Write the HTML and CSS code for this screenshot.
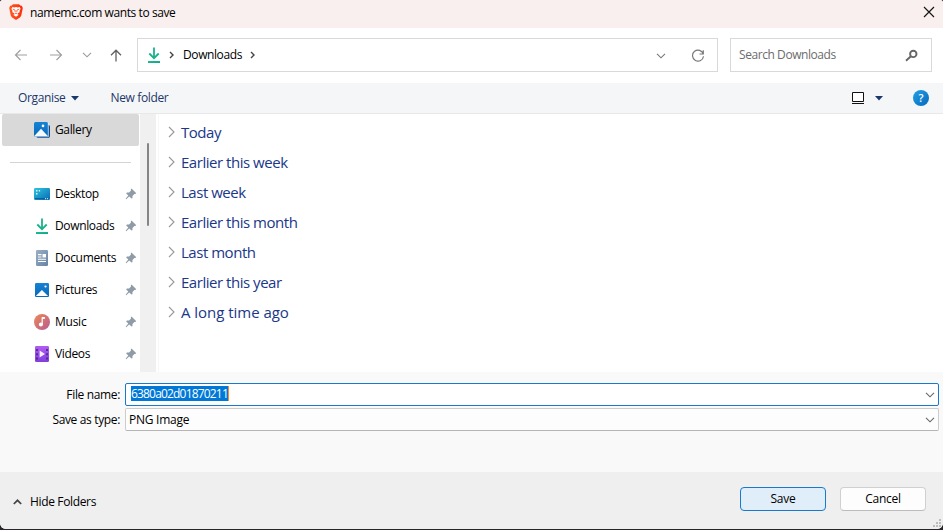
FILE: index.html
```html
<!DOCTYPE html>
<html lang="en-GB">
<head>
<meta charset="utf-8">
<title>namemc.com wants to save</title>
<link rel="stylesheet" href="styles.css">
</head>
<body>
<svg class="defs" aria-hidden="true">
  <defs>
    <linearGradient id="green" x1="0" y1="0" x2="1" y2="1"><stop offset="0" stop-color="#21c087"/><stop offset="1" stop-color="#12a391"/></linearGradient>
    <linearGradient id="blue" x1="0" y1="0" x2="0" y2="1"><stop offset="0" stop-color="#1583d5"/><stop offset="1" stop-color="#0869b9"/></linearGradient>
    <linearGradient id="cyan" x1="0" y1="0" x2="1" y2="1"><stop offset="0" stop-color="#2fc6dd"/><stop offset="1" stop-color="#0869b5"/></linearGradient>
    <linearGradient id="slate" x1="0" y1="0" x2="1" y2="1"><stop offset="0" stop-color="#9cafc6"/><stop offset="1" stop-color="#6782a5"/></linearGradient>
    <linearGradient id="coral" x1="0" y1="0" x2="1" y2="1"><stop offset="0" stop-color="#ee8956"/><stop offset="1" stop-color="#b75a92"/></linearGradient>
    <linearGradient id="violet" x1="0" y1="0" x2="0" y2="1"><stop offset="0" stop-color="#b05cf0"/><stop offset="1" stop-color="#833ddd"/></linearGradient>
    <linearGradient id="flame" x1="0" y1="0" x2="1" y2="0"><stop offset="0" stop-color="#ff5a24"/><stop offset="1" stop-color="#ff2a0a"/></linearGradient>
  </defs>
  <symbol id="pin" viewBox="0 0 12 12"><path d="M6.5 .6 11.3 5.3 10.2 6.1 9.4 5.9 7.5 7.9 7.4 10.2 6.5 10.5 4.2 8.4 1.2 11.3 .6 10.7 3.3 7.5 1.2 5.4 1.8 4.5 4.1 4.4 6 2.5 5.8 1.4Z" fill="#8f9ca5"/></symbol>
  <symbol id="download" viewBox="0 0 14 16"><path d="M7 .5v10.500M2.300 6.500 7 11.200 11.700 6.500" fill="none" stroke="#19b28c" stroke-width="1.8"/><path d="M1 14h12v2H1z" fill="url(#green)"/></symbol>
  <symbol id="chevron" viewBox="0 0 10 6"><path d="M1 .8 5 4.8 9 .8" fill="none" stroke="currentColor" stroke-width="1.1"/></symbol>
</svg>
<div class="dialog">
  <header class="titlebar">
    <svg class="brand" width="16" height="16" viewBox="0 0 16 16"><path d="M5 .2h6l1.300 1.300 1.500.3 1 2.200-.3 1.500-1.300 6.200-1.300 1.900L8 16l-3.900-2.400-1.300-1.900L1.500 5.500 1.200 4l1-2.200 1.500-.3Z" fill="url(#flame)"/><path d="M4.400 3.100 6.300 3.400 8 3 9.700 3.400l1.900-.3 1 1.700-1.100 2.100.2 1.300-2 1.100.8 1.600L8 12.800l-2.500-1.900.8-1.600-2-1.100.2-1.300-1.100-2.100Z" fill="#fff"/><path d="M4.800 5.200 7 6 7.200 8.200M11.200 5.200 9 6 8.800 8.200M6.400 10 8 9.100 9.600 10" fill="none" stroke="#ff4a22" stroke-width=".8"/></svg>
    <span class="title">namemc.com wants to save</span>
    <svg class="close" width="12" height="12" viewBox="0 0 12 12"><path d="m1 1 10 10M11 1 1 11" stroke="#151515" stroke-width="1.15"/></svg>
  </header>
  <nav class="nav">
    <div class="history">
      <svg width="14" height="12" viewBox="0 0 14 12"><path d="M13 6H1.500M6.500 1l-5 5 5 5" fill="none" stroke="#a0a0a0" stroke-width="1.2"/></svg>
      <svg width="14" height="12" viewBox="0 0 14 12"><path d="M1 6h11.500M7.500 1l5 5-5 5" fill="none" stroke="#a0a0a0" stroke-width="1.2"/></svg>
      <svg class="recent" width="10" height="6"><use href="#chevron"/></svg>
      <svg width="12" height="13" viewBox="0 0 12 13"><path d="M6 12.500V1.200M1 6.200l5-5 5 5" fill="none" stroke="#606060" stroke-width="1.3"/></svg>
    </div>
    <div class="address">
      <svg class="place" width="14" height="16"><use href="#download"/></svg>
      <svg class="crumb" width="5" height="8" viewBox="0 0 5 8"><path d="m1 1 3 3-3 3" fill="none" stroke="#444" stroke-width="1.4"/></svg>
      <span class="path">Downloads</span>
      <svg class="crumb" width="5" height="8" viewBox="0 0 5 8"><path d="m1 1 3 3-3 3" fill="none" stroke="#444" stroke-width="1.4"/></svg>
      <svg class="drop" width="10" height="6"><use href="#chevron"/></svg>
      <svg class="reload" width="14" height="14" viewBox="0 0 14 14"><path d="M12.300 5A5.500 5.500 0 1 0 12.500 7.200M12.300 1.200V5H8.500" fill="none" stroke="#777" stroke-width="1.15"/></svg>
    </div>
    <div class="search">
      <span>Search Downloads</span>
      <svg width="13" height="13" viewBox="0 0 13 13"><circle cx="8.300" cy="4.900" r="3.200" fill="none" stroke="#666" stroke-width="1.900"/><path d="M5.900 7.300 1 11.800" stroke="#666" stroke-width="1.900"/></svg>
    </div>
  </nav>
  <div class="toolbar">
    <span class="organise">Organise</span>
    <svg class="caret" width="8" height="5" viewBox="0 0 8 5"><path d="M0 0h8L4 4.600Z" fill="#19386d"/></svg>
    <span class="newfolder">New folder</span>
    <svg class="view" width="12" height="12" viewBox="0 0 12 12"><path d="M.5.500h11v9H.500z" fill="#fff" stroke="#111"/><path d="M0 11.500h12" stroke="#111"/></svg>
    <svg class="caret" width="8" height="5" viewBox="0 0 8 5"><path d="M0 0h8L4 4.600Z" fill="#19386d"/></svg>
    <span class="help">?</span>
  </div>
  <div class="body">
    <aside class="sidebar">
      <div class="item selected">
        <svg width="16" height="16" viewBox="0 0 16 16"><path d="M13 3h1.500a1.500 1.500 0 0 1 1.500 1.500V14a2 2 0 0 1-2 2H4a1.500 1.500 0 0 1-1.500-1.500V13Z" fill="#0c4d92"/><rect width="14" height="14.500" rx="1.500" fill="url(#blue)"/><path d="M14.300 1v13.800H1.200" fill="none" stroke="#e2eff9" stroke-width=".8"/><path d="m.3 14 6.700-7.300L13.800 14Z" fill="#f5faff"/><circle cx="9" cy="3.900" r="1.300" fill="#fff"/></svg>
        <span>Gallery</span>
      </div>
      <div class="divider"></div>
      <div class="item"><svg width="16" height="16" viewBox="0 0 16 16"><rect y="2" width="16" height="12" rx="1.200" fill="url(#cyan)"/><path d="M2 4h1.500v1.500H2zM2 7h1.500v1.500H2zM4.800 4h1.300v1.500H4.800z" fill="#d8f6fb"/><path d="M1 12.700h10" stroke="#07558f"/><path d="M11 12.700h1m1 0h1" stroke="#d8f6fb"/></svg><span>Desktop</span><svg class="pin" width="12" height="12"><use href="#pin"/></svg></div>
      <div class="item"><svg width="16" height="16" viewBox="0 0 16 16"><use href="#download" x="1" width="14" height="16"/></svg><span>Downloads</span><svg class="pin" width="12" height="12"><use href="#pin"/></svg></div>
      <div class="item"><svg width="16" height="16" viewBox="0 0 16 16"><rect x="2" width="12" height="16" rx="1.300" fill="url(#slate)"/><path d="M4 4.600h3.500M4 7h3.500M4 9.300h8M4 11.500h8" stroke="#fff" stroke-width="1.100"/><path d="M8.500 4h3.500v3.500H8.500z" fill="#fff"/></svg><span>Documents</span><svg class="pin" width="12" height="12"><use href="#pin"/></svg></div>
      <div class="item"><svg width="16" height="16" viewBox="0 0 16 16"><rect x="1" y="1" width="14" height="14" rx="1.200" fill="url(#blue)"/><path d="m1.800 14 6.100-6 6.200 6Z" fill="#fff"/><circle cx="11.500" cy="4.500" r="1.100" fill="#fff"/></svg><span>Pictures</span><svg class="pin" width="12" height="12"><use href="#pin"/></svg></div>
      <div class="item"><svg width="16" height="16" viewBox="0 0 16 16"><circle cx="8" cy="8" r="8" fill="url(#coral)"/><path d="M8.200 3.200v7" stroke="#fff" stroke-width="1.200"/><path d="M8 3h2.900v1.900H8z" fill="#fff"/><circle cx="6.900" cy="10.600" r="2" fill="#fff"/></svg><span class="music">Music</span><svg class="pin" width="12" height="12"><use href="#pin"/></svg></div>
      <div class="item"><svg width="16" height="16" viewBox="0 0 16 16"><rect x="1" width="14" height="16" rx="1.200" fill="url(#violet)"/><path d="M3 3v11M13 3v11" stroke="#3d217d" stroke-width="1.500" stroke-dasharray="2 2.200"/><path d="M5.600 4.500v7L11 8Z" fill="#f5edff"/></svg><span>Videos</span><svg class="pin" width="12" height="12"><use href="#pin"/></svg></div>
    </aside>
    <div class="scrollbar"><div class="thumb"></div></div>
    <main class="groups">
      <div class="group"><svg width="7" height="12" viewBox="0 0 7 12"><path d="m1 1 5 5-5 5"/></svg><span>Today</span></div>
      <div class="group"><svg width="7" height="12" viewBox="0 0 7 12"><path d="m1 1 5 5-5 5"/></svg><span>Earlier this week</span></div>
      <div class="group"><svg width="7" height="12" viewBox="0 0 7 12"><path d="m1 1 5 5-5 5"/></svg><span>Last week</span></div>
      <div class="group"><svg width="7" height="12" viewBox="0 0 7 12"><path d="m1 1 5 5-5 5"/></svg><span>Earlier this month</span></div>
      <div class="group"><svg width="7" height="12" viewBox="0 0 7 12"><path d="m1 1 5 5-5 5"/></svg><span>Last month</span></div>
      <div class="group"><svg width="7" height="12" viewBox="0 0 7 12"><path d="m1 1 5 5-5 5"/></svg><span>Earlier this year</span></div>
      <div class="group"><svg width="7" height="12" viewBox="0 0 7 12"><path d="m1 1 5 5-5 5"/></svg><span class="loose">A long time ago</span></div>
    </main>
  </div>
  <section class="form">
    <div class="label">File name:</div>
    <div class="field name"><span class="selection">6380a02d01870211</span><svg width="10" height="6"><use href="#chevron"/></svg></div>
    <div class="label">Save as type:</div>
    <div class="field type"><span>PNG Image</span><svg width="10" height="6"><use href="#chevron"/></svg></div>
  </section>
  <footer class="footer">
    <svg width="9" height="6" viewBox="0 0 9 6"><path d="m.8 5 3.700-3.700L8.200 5" fill="none" stroke="#444" stroke-width="1.700"/></svg>
    <span class="hide">Hide Folders</span>
    <div class="button primary">Save</div>
    <div class="button">Cancel</div>
    <svg class="grip" width="8" height="8" viewBox="0 0 8 8"><path d="M6 0h2v2H6zM3 3h2v2H3zM6 3h2v2H6zM0 6h2v2H0zM3 6h2v2H3zM6 6h2v2H6z" fill="#bdbdbd"/></svg>
  </footer>
</div>
</body>
</html>
```

FILE: styles.css
```css
* { box-sizing: border-box; }
body {
  margin: 0;
  background: #29252b;
  font: 12px/16px "Open Sans", "Noto Sans", sans-serif;
  letter-spacing: -0.35px;
  color: #000;
}
svg { display: block; flex: none; }
span { white-space: nowrap; }
.defs { position: absolute; width: 0; height: 0; }
.dialog {
  width: 943px;
  height: 529px;
  display: flex;
  flex-direction: column;
  background: #fff;
  border-radius: 3px 3px 6px 6px;
  overflow: hidden;
}
.titlebar { height: 28px; display: flex; align-items: center; padding: 0 8px; background: #f9efee; flex: none; }
.brand { margin-top: -4px; }
.title { margin: -2px auto 0 6px; letter-spacing: -0.41px; }
.close { margin-top: -4px; }

.nav { height: 55px; display: flex; align-items: center; flex: none; padding: 0 11px 1px 14px; }
.history { width: 123px; display: flex; align-items: center; }
.history svg + svg { margin-left: 21px; }
.history .recent { margin-left: 19px; color: #999; }
.history .recent + svg { margin-left: 18px; }
.address, .search { height: 34px; display: flex; align-items: center; border: 1px solid #d9d9d9; }
.address { width: 581px; padding: 0 12px 0 9px; }
.crumb { margin-left: 8px; }
.path { margin-left: 9px; letter-spacing: -0.4px; }
.drop { margin-left: auto; margin-right: 25px; margin-top: 2px; color: #777; }
.reload { margin-top: 2px; }
.search { width: 202px; margin-left: 12px; padding: 0 13px 0 8px; justify-content: space-between; color: #6c6c6c; letter-spacing: -0.43px; }

.toolbar { height: 31px; display: flex; align-items: center; flex: none; padding: 0 14px 0 18px; background: #f5f6f8; border-bottom: 1px solid #e7e8ea; color: #1d3768; }
.toolbar .caret { margin-left: 6px; }
.newfolder { margin: 0 auto 0 31px; }
.view + .caret { margin: 0 30px 0 11px; }
.help { width: 16px; height: 16px; border-radius: 50%; background: linear-gradient(135deg, #24a0e4, #0668bd); color: #fff; text-align: center; font-size: 11px; font-weight: 600; letter-spacing: 0; }

.body { height: 258px; display: flex; flex: none; }
.sidebar { width: 140px; }
.item { height: 32px; display: flex; align-items: center; padding: 0 3px 0 34px; }
.item span { margin-left: 5px; }
.item .music { letter-spacing: -0.25px; }
.item.selected { width: 137px; margin-left: 2px; padding-left: 32px; background: #d9d9d9; border-radius: 2px; }
.item .pin { margin-left: auto; }
.divider { height: 1px; margin: 16px 9px 15px 10px; background: #d4d4d4; }
.scrollbar { width: 16px; padding: 29px 7px 0; background: #f0f0f0; }
.thumb { width: 2px; height: 83px; border-radius: 1px; background: #858585; }
.groups { flex: 1; margin-left: 2px; padding: 3px 0 0 10px; border-left: 1px solid #f7f7f7; }
.group { height: 30px; display: flex; align-items: center; font-size: 15px; line-height: 22px; letter-spacing: -0.47px; color: #203789; }
.group .loose { letter-spacing: -0.03px; }
.group svg { margin-left: -1px; margin-right: 6px; fill: none; stroke: #999; stroke-width: 1.1; }

.form { height: 100px; flex: none; display: grid; grid-template-columns: 120px 814px; grid-template-rows: 23px 23px; column-gap: 5px; row-gap: 2px; padding: 11px 4px 0 0; background: #f9f9f9; }
.label { text-align: right; line-height: 24px; }
.field { height: 23px; display: flex; align-items: center; justify-content: space-between; padding: 0 3px; border: 1px solid #ccc; border-bottom-color: #b5b5b5; border-radius: 2px; background: #fdfdfd; letter-spacing: -0.25px; }
.field svg { color: #666; }
.field.name { padding-left: 5px; border-color: #1979cc; background: #fff; }
.selection { height: 15px; line-height: 15px; background: #0078d7; color: #fff; border-right: 1px solid #f38b34; margin-top: -2px; letter-spacing: -0.82px; }

.footer { position: relative; height: 57px; display: flex; align-items: flex-start; flex: none; padding: 15px 17px 0 13px; background: #efefef; }
.footer > svg:first-child { margin-top: 12px; }
.hide { margin: 7px auto 0 8px; }
.button { width: 86px; height: 24px; margin-left: 14px; border: 1px solid #d0d0d0; border-bottom-color: #bcbcbc; border-radius: 4px; background: #fdfdfd; text-align: center; line-height: 22px; letter-spacing: -0.25px; }
.button.primary { border-color: #1979cc; background: #e0eef9; }
.grip { position: absolute; right: 2px; bottom: 2px; }
```
